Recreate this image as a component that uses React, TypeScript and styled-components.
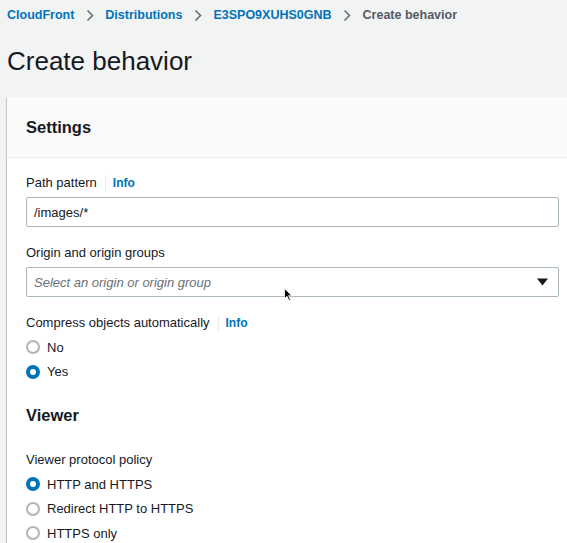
import React from "react";
import styled, { createGlobalStyle } from "styled-components";

const Global = createGlobalStyle`
  html, body { margin: 0; padding: 0; background: #f2f3f3; }
  body { font-family: "Liberation Sans", Arial, sans-serif; color: #16191f; overflow: hidden; }
  * { box-sizing: border-box; }
`;

const Page = styled.div`
  width: 567px;
  height: 543px;
  overflow: hidden;
  padding: 0 0 0 7px;
  background: #f2f3f3;
`;

const Breadcrumbs = styled.nav`
  display: flex;
  align-items: center;
  height: 30px;
  font-size: 12.5px;
  font-weight: bold;
  white-space: nowrap;
`;

const Crumb = styled.span<{ $current?: boolean }>`
  color: ${(p) => (p.$current ? "#545b64" : "#0073bb")};
`;

const Sep = styled.span`
  display: inline-flex;
  margin: 0 11.5px;
  color: #687078;
`;

const Title = styled.h1`
  margin: 14px 0 0;
  font-size: 26px;
  font-weight: normal;
  line-height: 34px;
  color: #16191f;
`;

const Panel = styled.section`
  margin-top: 19px;
  width: 600px;
  background: #fff;
  box-shadow: 0 1px 1px 0 rgba(0, 28, 36, 0.3), 1px 1px 1px 0 rgba(0, 28, 36, 0.15),
    -1px 1px 1px 0 rgba(0, 28, 36, 0.15);
`;

const PanelHeader = styled.div`
  padding: 18px 19px;
  background: #fafafa;
  border-bottom: 1px solid #eaeded;
`;

const H2 = styled.h2`
  margin: 0;
  font-size: 16.5px;
  font-weight: bold;
  line-height: 24px;
`;

const Body = styled.div`
  padding: 15px 9px 0 19px;
  width: 561px;
`;

const Field = styled.div<{ $mt?: number }>`
  margin-top: ${(p) => p.$mt ?? 0}px;
`;

const Label = styled.div`
  display: flex;
  align-items: center;
  font-size: 13px;
  line-height: 20px;
  height: 20px;
`;

const Info = styled.span`
  margin-left: 8px;
  padding-left: 7px;
  border-left: 1px solid #eaeded;
  color: #0073bb;
  font-weight: bold;
  font-size: 12px;
  line-height: 16px;
`;

const Input = styled.div`
  margin-top: 4px;
  height: 30px;
  border: 1px solid #aab7b8;
  border-radius: 2px;
  padding: 0 7px;
  display: flex;
  align-items: center;
  font-size: 13px;
  color: #16191f;
`;

const Select = styled(Input)`
  justify-content: space-between;
  font-style: italic;
  color: #687078;
`;

const Caret = styled.svg`
  width: 11px;
  height: 8px;
  margin-right: 3px;
`;

const Radios = styled.div`
  display: flex;
  flex-direction: column;
  gap: 4.5px;
  margin-top: 4px;
`;

const RadioRow = styled.label`
  display: flex;
  align-items: center;
  height: 20px;
  font-size: 13px;
`;

const Dot = styled.span<{ $on?: boolean }>`
  width: 14px;
  height: 14px;
  border-radius: 50%;
  margin-right: 7px;
  background: #fff;
  border: ${(p) => (p.$on ? "4px solid #0073bb" : "2px solid #aab7b8")};
`;

const Section = styled.div`
  margin-top: 21.5px;
`;

const Cursor = styled.svg`
  position: absolute;
  left: 284px;
  top: 288px;
  width: 9px;
  height: 13px;
`;

function Radio({ on, children }: { on?: boolean; children: React.ReactNode }) {
  return (
    <RadioRow>
      <Dot $on={on} />
      {children}
    </RadioRow>
  );
}

function Chevron() {
  return (
    <Sep>
      <svg width="8" height="13" viewBox="0 0 8 13">
        <path d="M1.5 1.5 L6.5 6.5 L1.5 11.5" fill="none" stroke="#687078" strokeWidth="1.6" />
      </svg>
    </Sep>
  );
}

export default function App() {
  return (
    <Page>
      <Global />
      <Breadcrumbs>
        <Crumb>CloudFront</Crumb>
        <Chevron />
        <Crumb>Distributions</Crumb>
        <Chevron />
        <Crumb>E3SPO9XUHS0GNB</Crumb>
        <Chevron />
        <Crumb $current>Create behavior</Crumb>
      </Breadcrumbs>
      <Title>Create behavior</Title>
      <Panel>
        <PanelHeader>
          <H2>Settings</H2>
        </PanelHeader>
        <Body>
          <Field>
            <Label>
              Path pattern<Info>Info</Info>
            </Label>
            <Input>/images/*</Input>
          </Field>
          <Field $mt={16}>
            <Label>Origin and origin groups</Label>
            <Select>
              Select an origin or origin group
              <Caret viewBox="0 0 11 8">
                <path d="M0 0.5 H11 L5.5 7.5 Z" fill="#16191f" />
              </Caret>
            </Select>
          </Field>
          <Field $mt={16}>
            <Label>
              Compress objects automatically<Info>Info</Info>
            </Label>
            <Radios>
              <Radio>No</Radio>
              <Radio on>Yes</Radio>
            </Radios>
          </Field>
          <Section>
            <H2>Viewer</H2>
          </Section>
          <Field $mt={23}>
            <Label>Viewer protocol policy</Label>
            <Radios>
              <Radio on>HTTP and HTTPS</Radio>
              <Radio>Redirect HTTP to HTTPS</Radio>
              <Radio>HTTPS only</Radio>
            </Radios>
          </Field>
        </Body>
      </Panel>
      <Cursor viewBox="0 0 9 13">
        <path d="M0.5 0.5 V10.5 L3 8.3 L5 12.5 L6.5 11.8 L4.6 7.7 H7.8 Z" fill="#000" stroke="#fff" strokeWidth="0.8" />
      </Cursor>
    </Page>
  );
}
